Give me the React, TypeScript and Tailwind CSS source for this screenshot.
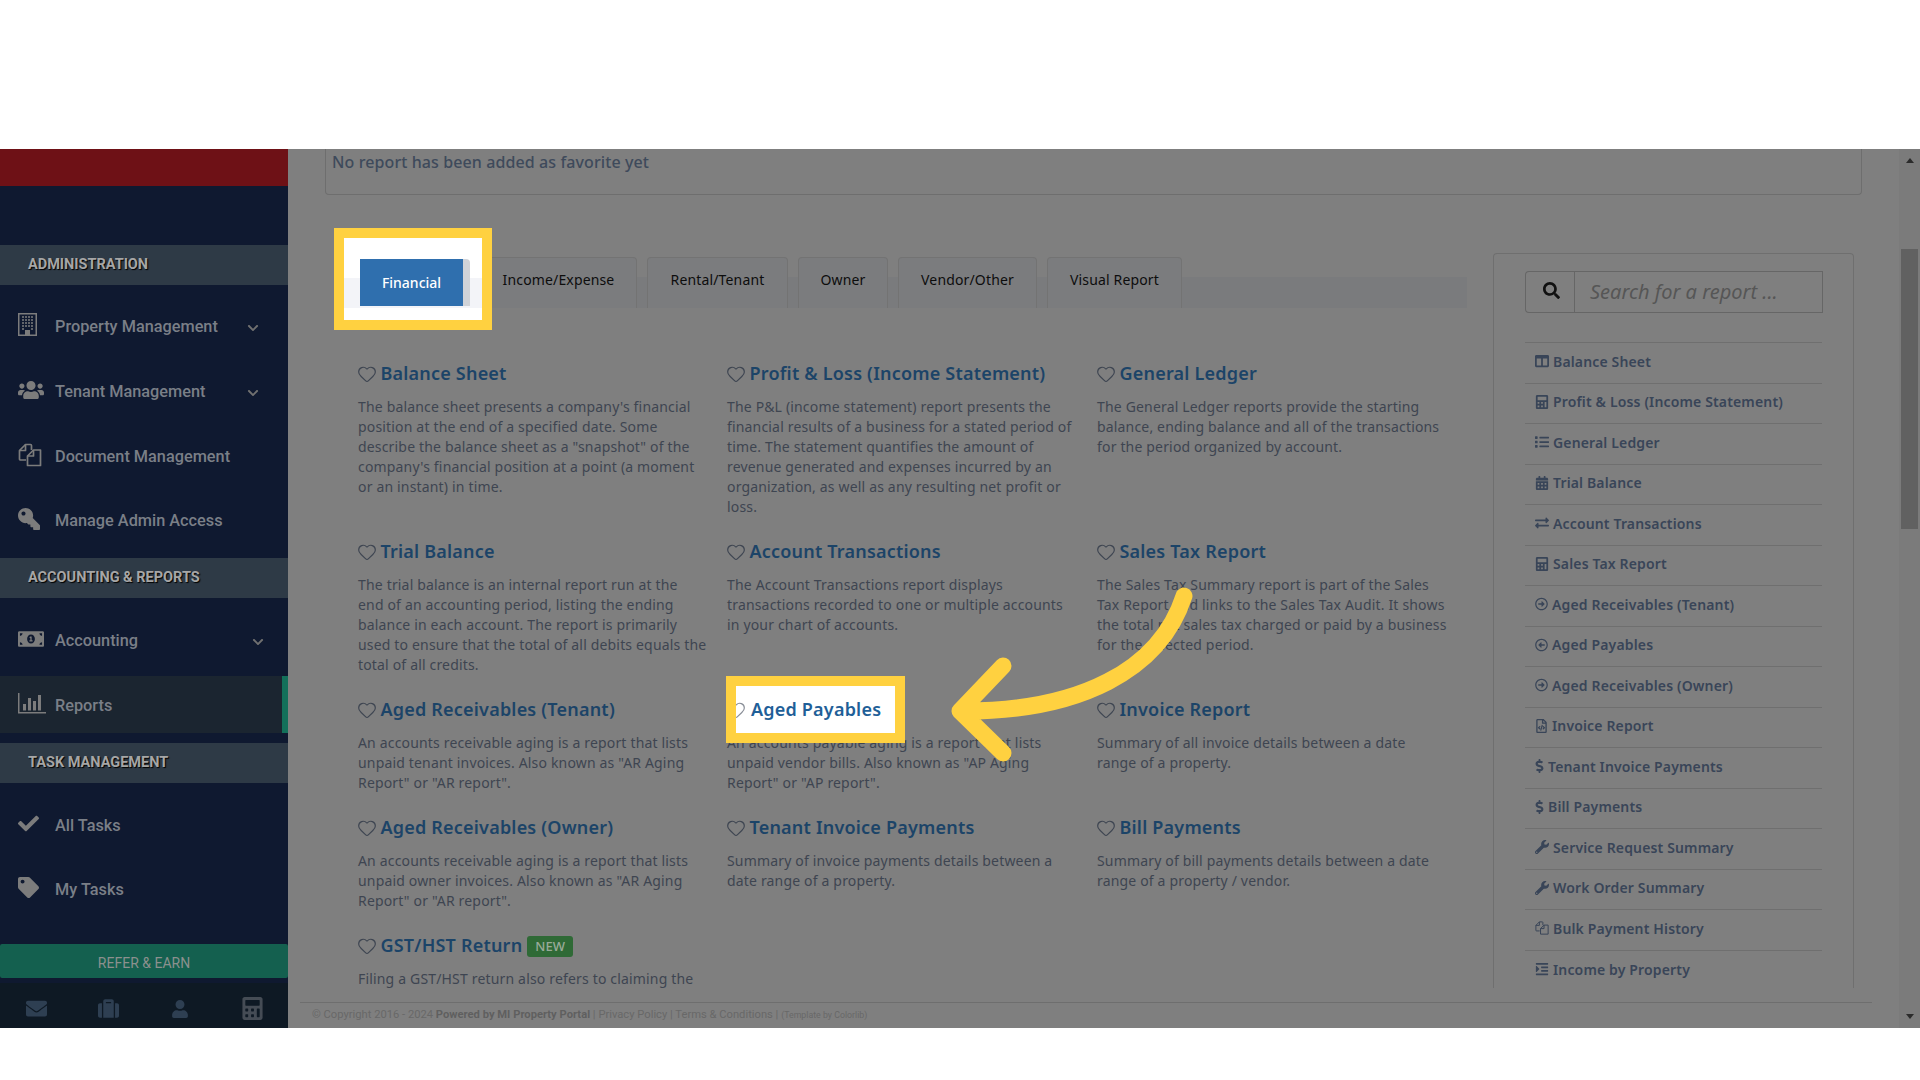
import {
  FaUsers,
  FaKey,
  FaMoneyBillAlt,
  FaCheck,
  FaTag,
  FaChevronDown,
  FaEnvelope,
  FaSuitcase,
  FaUser,
  FaCalculator,
  FaSearch,
  FaColumns,
  FaList,
  FaCalendarAlt,
  FaExchangeAlt,
  FaRegArrowAltCircleRight,
  FaRegArrowAltCircleLeft,
  FaRegFileCode,
  FaDollarSign,
  FaWrench,
  FaIndent,
} from "react-icons/fa";
import { Heart } from "lucide-react";

const BuildingIcon = ({ className }: { className?: string }) => (
  <svg className={className} width="19" height="23" viewBox="0 0 19 23" fill="none" stroke="currentColor">
    <rect x="0.75" y="0.75" width="17.5" height="21.5" strokeWidth="1.5" />
    <path
      d="M4 4h2M7 4h2M10 4h2M13 4h2M4 7h2M7 7h2M10 7h2M13 7h2M4 10h2M7 10h2M10 10h2M13 10h2M4 13h2M7 13h2M10 13h2M13 13h2M4 16h2M13 16h2"
      strokeWidth="1.6"
    />
    <rect x="7" y="17" width="5" height="5" fill="currentColor" stroke="none" />
  </svg>
);

const FilesIcon = ({ className }: { className?: string }) => (
  <svg className={className} viewBox="0 0 24 24" fill="none" stroke="currentColor" strokeWidth="1.7" strokeLinejoin="round">
    <path d="M8 17H2.5a1 1 0 0 1-1-1V7.5L7.5 1.5h5a1 1 0 0 1 1 1V7" />
    <path d="M7.5 1.5V7.5H1.5" />
    <path d="M9.5 22.5V13l6-6h7v15.5z" />
    <path d="M15.5 7v6h-6" />
  </svg>
);

const BarsIcon = ({ className }: { className?: string }) => (
  <svg className={className} width="28" height="21" viewBox="0 0 28 21" fill="currentColor">
    <path d="M0 0h1.5v19H28v1.5H0z" />
    <rect x="5" y="11" width="3" height="6.5" />
    <rect x="10" y="5" width="3" height="12.5" />
    <rect x="15" y="8" width="3" height="9.5" />
    <rect x="20" y="2" width="3" height="15.5" />
  </svg>
);

const reports = [
  {
    title: "Balance Sheet",
    text: "The balance sheet presents a company's financial position at the end of a specified date. Some describe the balance sheet as a \"snapshot\" of the company's financial position at a point (a moment or an instant) in time.",
  },
  {
    title: "Profit & Loss (Income Statement)",
    text: "The P&L (income statement) report presents the financial results of a business for a stated period of time. The statement quantifies the amount of revenue generated and expenses incurred by an organization, as well as any resulting net profit or loss.",
  },
  {
    title: "General Ledger",
    text: "The General Ledger reports provide the starting balance, ending balance and all of the transactions for the period organized by account.",
  },
  {
    title: "Trial Balance",
    text: "The trial balance is an internal report run at the end of an accounting period, listing the ending balance in each account. The report is primarily used to ensure that the total of all debits equals the total of all credits.",
  },
  {
    title: "Account Transactions",
    text: "The Account Transactions report displays transactions recorded to one or multiple accounts in your chart of accounts.",
  },
  {
    title: "Sales Tax Report",
    text: "The Sales Tax Summary report is part of the Sales Tax Report and links to the Sales Tax Audit. It shows the total net sales tax charged or paid by a business for the selected period.",
  },
  {
    title: "Aged Receivables (Tenant)",
    text: "An accounts receivable aging is a report that lists unpaid tenant invoices. Also known as \"AR Aging Report\" or \"AR report\".",
  },
  {
    title: "Aged Payables",
    text: "An accounts payable aging is a report that lists unpaid vendor bills. Also known as \"AP Aging Report\" or \"AP report\".",
  },
  {
    title: "Invoice Report",
    text: "Summary of all invoice details between a date\nrange of a property.",
  },
  {
    title: "Aged Receivables (Owner)",
    text: "An accounts receivable aging is a report that lists unpaid owner invoices. Also known as \"AR Aging Report\" or \"AR report\".",
  },
  {
    title: "Tenant Invoice Payments",
    text: "Summary of invoice payments details between a date range of a property.",
  },
  {
    title: "Bill Payments",
    text: "Summary of bill payments details between a date range of a property / vendor.",
  },
  {
    title: "GST/HST Return",
    badge: "NEW",
    text: "Filing a GST/HST return also refers to claiming the",
  },
];

const quickLinks = [
  { icon: FaColumns, label: "Balance Sheet", size: "w-[14px]" },
  { icon: FaCalculator, label: "Profit & Loss (Income Statement)", size: "w-[14px]" },
  { icon: FaList, label: "General Ledger", size: "w-[14px]" },
  { icon: FaCalendarAlt, label: "Trial Balance", size: "w-[14px]" },
  { icon: FaExchangeAlt, label: "Account Transactions", size: "w-[14px]" },
  { icon: FaCalculator, label: "Sales Tax Report", size: "w-[14px]" },
  { icon: FaRegArrowAltCircleRight, label: "Aged Receivables (Tenant)", size: "w-[13px]" },
  { icon: FaRegArrowAltCircleLeft, label: "Aged Payables", size: "w-[13px]" },
  { icon: FaRegArrowAltCircleRight, label: "Aged Receivables (Owner)", size: "w-[13px]" },
  { icon: FaRegFileCode, label: "Invoice Report", size: "w-[13px]" },
  { icon: FaDollarSign, label: "Tenant Invoice Payments", size: "w-[9px]" },
  { icon: FaDollarSign, label: "Bill Payments", size: "w-[9px]" },
  { icon: FaWrench, label: "Service Request Summary", size: "w-[14px]" },
  { icon: FaWrench, label: "Work Order Summary", size: "w-[14px]" },
  { icon: FilesIcon, label: "Bulk Payment History", size: "w-[14px]" },
  { icon: FaIndent, label: "Income by Property", size: "w-[14px]" },
];

const tabs = [
  { label: "Income/Expense", width: "w-[157px]" },
  { label: "Rental/Tenant", width: "w-[141px]" },
  { label: "Owner", width: "w-[90px]" },
  { label: "Vendor/Other", width: "w-[139px]" },
  { label: "Visual Report", width: "w-[135px]" },
];

const SectionHead = ({ label }: { label: string }) => (
  <div className="flex h-10 items-center bg-[#2e3a46] pl-[28px] text-[14.5px] font-bold text-[#a6a6a6] [text-shadow:1px_1px_1px_#000]">
    {label}
  </div>
);

const NavItem = ({
  icon: Icon,
  label,
  chevron,
  iconClass,
}: {
  icon: any;
  label: string;
  chevron?: string;
  iconClass: string;
}) => (
  <div className="flex h-full items-center pl-[18px]">
    <span className="flex w-[37px] shrink-0 items-center">
      <Icon className={`${iconClass} -translate-y-[3px] text-[#7c7c7c]`} />
    </span>
    <span className="text-[16.3px] font-medium text-[#7a7f87]">{label}</span>
    {chevron && <FaChevronDown className={`ml-auto text-[12px] text-[#707070] ${chevron}`} />}
  </div>
);

const Sidebar = () => (
  <aside className="flex h-full w-[288px] shrink-0 flex-col bg-[#0f1930] font-['Roboto',sans-serif]">
    <div className="h-[37px] bg-[#6e1116]" />
    <div className="mt-[59px]">
      <SectionHead label="ADMINISTRATION" />
    </div>
    <div className="mt-[10px] h-[65px]">
      <NavItem icon={BuildingIcon} iconClass="" label="Property Management" chevron="mr-[29px]" />
    </div>
    <div className="h-[65px]">
      <NavItem icon={FaUsers} iconClass="text-[26px]" label="Tenant Management" chevron="mr-[29px]" />
    </div>
    <div className="h-[65px]">
      <NavItem icon={FilesIcon} iconClass="h-[24px] w-[24px]" label="Document Management" />
    </div>
    <div className="h-[63px]">
      <NavItem icon={FaKey} iconClass="text-[22px] -scale-x-100" label="Manage Admin Access" />
    </div>
    <div className="mt-[5px]">
      <SectionHead label="ACCOUNTING & REPORTS" />
    </div>
    <div className="mt-[9px] h-[69px]">
      <NavItem icon={FaMoneyBillAlt} iconClass="text-[26px]" label="Accounting" chevron="mr-[24px]" />
    </div>
    <div className="h-[57px] border-r-[6px] border-r-[#13705a] bg-[#1b2530] pt-[4px]">
      <NavItem icon={BarsIcon} iconClass="" label="Reports" />
    </div>
    <div className="mt-[10px]">
      <SectionHead label="TASK MANAGEMENT" />
    </div>
    <div className="mt-[11px] h-[64px]">
      <NavItem icon={FaCheck} iconClass="text-[21px]" label="All Tasks" />
    </div>
    <div className="h-[64px]">
      <NavItem icon={FaTag} iconClass="text-[21px]" label="My Tasks" />
    </div>
    <div className="mt-[22px] flex h-[34px] items-center justify-center rounded-[2px] bg-[#14604f] pt-[4px] text-[14px] text-[#8b908e]">
      REFER &amp; EARN
    </div>
    <div className="mt-auto grid h-[45px] grid-cols-4 items-center justify-items-center bg-[#0e1924] pt-[6px] text-[#2e3f52]">
      <FaEnvelope className="text-[21px]" />
      <FaSuitcase className="text-[21px]" />
      <FaUser className="text-[18px]" />
      <FaCalculator className="text-[23px] text-[#454c55]" />
    </div>
  </aside>
);

const ReportCard = ({ title, text, badge }: { title: string; text: string; badge?: string }) => (
  <div className="pr-[20px]">
    <div className="flex h-[26px] items-center gap-[4px]">
      <Heart className="-ml-[1.5px] h-[20px] w-[20px] shrink-0 text-[#3f4652]" strokeWidth={1.4} />
      <span className="text-[18px] font-semibold tracking-[0.2px] text-[#1c4468]">{title}</span>
      {badge && (
        <span className="ml-[1px] mt-[2px] rounded-[3px] bg-[#2f6a36] px-[8px] text-[13px] leading-[21px] font-medium text-[#99aa99]">
          {badge}
        </span>
      )}
    </div>
    <p className="mt-[10px] mb-[22px] whitespace-pre-line text-[14px] leading-[20px] tracking-[0.17px] text-[#3e4551]">
      {text}
    </p>
  </div>
);

const SearchPanel = () => (
  <div className="ml-[26px] h-[735px] w-[361px] shrink-0 rounded-t-[4px] border border-b-0 border-[#6f6f6f] px-[31px] pt-[17px]">
    <div className="flex h-[42px] w-[298px]">
      <div className="flex w-[49px] items-center justify-center rounded-l-[4px] border border-r-0 border-[#666]">
        <FaSearch className="mb-[3px] ml-[2px] text-[17px] text-[#111]" />
      </div>
      <div className="flex flex-1 items-center border border-[#666] pl-[15px] text-[20px] italic text-[#565656]">
        Search for a report ...
      </div>
    </div>
    <div className="mt-[29px] border-t border-[#6f6f6f]">
      {quickLinks.map((link) => (
        <div
          key={link.label}
          className="flex h-[40.53px] items-center gap-[4px] border-b border-[#6f6f6f] pb-[3px] pl-[10px] text-[14px] font-semibold tracking-[0.15px] text-[#394558] last:border-b-0"
        >
          <link.icon className={`h-[14px] shrink-0 ${link.size}`} />
          <span>{link.label}</span>
        </div>
      ))}
    </div>
  </div>
);

const Main = () => (
  <main className="flex h-full min-w-0 flex-1 flex-col bg-[#7f7f7f] font-['Noto_Sans',sans-serif]">
    <div className="h-[853px] shrink-0">
      <div className="ml-[37px] flex h-[46px] w-[1537px] items-start rounded-b-[4px] border border-t-0 border-[#6e6e6e] pl-[6px] text-[16px] font-medium leading-[26px] tracking-[0.1px] text-[#3e4a5b]">
        No report has been added as favorite yet
      </div>
      <div className="ml-[47px] mt-[58px] flex h-[735px] overflow-hidden">
        <div className="w-[1132px] shrink-0 pt-[4px]">
          <div className="flex gap-[10px] bg-[linear-gradient(to_bottom,transparent_20px,#7a7b7d_20px)] pl-[25px]">
            <div className="h-[51px] w-[110px]" />
            {tabs.map((tab) => (
              <div
                key={tab.label}
                className={`flex h-[51px] items-center justify-center rounded-t-[4px] border border-b-0 border-[#737373] bg-[#7b7c7e] pb-[7px] text-[14px] tracking-[0.15px] text-[#0d0d0d] ${tab.width}`}
              >
                {tab.label}
              </div>
            ))}
          </div>
          <div className="mt-[52.5px] grid grid-cols-[369px_370px_370px] pl-[23px]">
            {reports.map((r) => (
              <ReportCard key={r.title} title={r.title} text={r.text} badge={r.badge} />
            ))}
          </div>
        </div>
        <SearchPanel />
      </div>
    </div>
    <div className="ml-[12px] mr-[27px] flex h-[26px] items-center border-t border-[#6e6e6e] pl-[12px] font-['Roboto',sans-serif] text-[11.2px] text-[#686868]">
      <span>© Copyright 2016 - 2024&nbsp;</span>
      <span className="font-bold text-[#5f5f5f]">Powered by MI Property Portal</span>
      <span>&nbsp;| Privacy Policy | Terms &amp; Conditions |&nbsp;</span>
      <span className="text-[8.8px]">(Template by Colorlib)</span>
    </div>
  </main>
);

const Scrollbar = () => (
  <div className="relative h-full w-[21px] shrink-0 bg-[#7b7b7b] pl-[2px]">
    <div className="absolute left-[7px] top-[9px] h-0 w-0 border-x-[4px] border-b-[5px] border-x-transparent border-b-[#2b2b2b]" />
    <div className="mt-[100px] h-[280px] w-[17px] bg-[#616161]" />
    <div className="absolute bottom-[9px] left-[7px] h-0 w-0 border-x-[4px] border-t-[5px] border-x-transparent border-t-[#2b2b2b]" />
  </div>
);

export default function App() {
  return (
    <div className="relative h-[1080px] w-[1920px] overflow-hidden bg-white">
      <div className="h-[149px]" />
      <div className="flex h-[879px]">
        <Sidebar />
        <Main />
        <Scrollbar />
      </div>

      {/* spotlight on the Financial tab */}
      <div className="absolute left-[334px] top-[228px] h-[102px] w-[158px] border-[10px] border-[#ffd140] bg-white font-['Noto_Sans',sans-serif]">
        <div className="mt-[40px] h-[30px] bg-[#f3f4f8]" />
        <div className="absolute left-[16px] top-[21px] h-[47px] w-[110px] rounded-tr-[4px] bg-[#d0d3d8]">
          <div className="flex h-full w-[103px] items-center justify-center bg-[#2f6fae] text-[14px] font-medium text-white">
            Financial
          </div>
        </div>
      </div>

      {/* spotlight on Aged Payables */}
      <div className="absolute left-[726px] top-[676px] flex h-[67px] w-[179px] items-center overflow-hidden border-[10px] border-[#ffd140] bg-white font-['Noto_Sans',sans-serif]">
        <Heart className="ml-[-10px] h-[20px] w-[20px] shrink-0 text-[#8a8f98]" strokeWidth={1.4} />
        <span className="ml-[5px] text-[18px] font-semibold tracking-[0.2px] text-[#1f5f98]">Aged Payables</span>
      </div>

      {/* arrow */}
      <svg className="pointer-events-none absolute left-0 top-0" width="1920" height="1080" fill="none">
        <path
          d="M1184 596 C1160 670 1080 712 960 711 M1003 666 L960 711 L1003 753"
          stroke="#ffd140"
          strokeWidth="17"
          strokeLinecap="round"
          strokeLinejoin="round"
        />
      </svg>
    </div>
  );
}
